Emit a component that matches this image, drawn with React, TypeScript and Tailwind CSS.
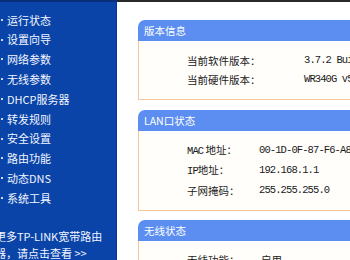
import React from "react";

const cjk = { fontFamily: '"Noto Sans CJK SC", "Noto Sans", sans-serif' };
const mono = { fontFamily: '"Liberation Mono", "Noto Sans CJK SC", monospace' };

const menu = ["运行状态", "设置向导", "网络参数", "无线参数", "DHCP服务器", "转发规则", "安全设置", "路由功能", "动态DNS", "系统工具"];

function Header({ title }: { title: string }) {
  return (
    <div className="h-[21px] bg-[#5b8ef0] rounded-tl-[7px] pl-[6px] text-white text-[10.5px] leading-[21px] whitespace-nowrap" style={cjk}>
      {title}
    </div>
  );
}

function Row({ label, value, lw, h }: { label: React.ReactNode; value: string; lw: number; h: string }) {
  return (
    <div className={`flex items-center ${h} pl-[48px] whitespace-nowrap text-[#1a1a1a]`}>
      <div className="text-[10.5px] shrink-0" style={{ ...cjk, width: lw }}>{label}</div>
      <div className="text-[10.5px] tracking-[-0.9px]" style={mono}>{value}</div>
    </div>
  );
}

export default function App() {
  return (
    <div className="w-[350px] h-[260px] overflow-hidden flex bg-white">
      <div className="w-[117px] shrink-0 h-full bg-[#0a44a8] border-r border-[#07349a] flex flex-col overflow-hidden">
        <div className="h-[2px] bg-[#0a2f7a] shrink-0" />
        <div className="pt-[8px] flex flex-col">
          {menu.map((m) => (
            <div key={m} className="flex items-center h-[19.8px] text-[#f2f6ff] text-[11px] whitespace-nowrap" style={cjk}>
              <span className="w-[2px] h-[2px] bg-[#c9d8f5] ml-[1px] mr-[4px] shrink-0" />
              {m}
            </div>
          ))}
        </div>
        <div className="mt-[20px] ml-[-5px] text-[#f2f6ff] text-[11px] leading-[17px] whitespace-nowrap" style={cjk}>
          <div>更多TP-LINK宽带路由</div>
          <div>器，请点击查看 &gt;&gt;</div>
        </div>
      </div>
      <div className="flex-1 h-full flex flex-col overflow-hidden">
        <div className="h-[2px] bg-[#2a2a2a] shrink-0" />
        <div className="pl-[21px] pt-[18px] flex flex-col w-[300px]">
          <div>
            <Header title="版本信息" />
            <div className="h-[59px] bg-[#fffefb] border-l border-b border-[#f3c99b] pt-[10px]">
              <Row label="当前软件版本：" value="3.7.2 Build 091201 Rel.58730n" lw={117} h="h-[19px]" />
              <Row label="当前硬件版本：" value="WR340G v5 00000000" lw={117} h="h-[19px]" />
            </div>
          </div>
          <div className="mt-[10px]">
            <Header title="LAN口状态" />
            <div className="h-[80px] bg-[#fffefb] border-l border-b border-[#f3c99b] pt-[10px]">
              <Row label={<><span className="tracking-[-0.9px]" style={mono}>MAC</span> 地址：</>} value="00-1D-0F-87-F6-A8" lw={72} h="h-[20px]" />
              <Row label={<><span className="tracking-[-0.9px]" style={mono}>IP</span>地址：</>} value="192.168.1.1" lw={72} h="h-[20px]" />
              <Row label="子网掩码：" value="255.255.255.0" lw={72} h="h-[20px]" />
            </div>
          </div>
          <div className="mt-[9px]">
            <Header title="无线状态" />
            <div className="h-[80px] bg-[#fffefb] border-l border-b border-[#f3c99b] pt-[9px]">
              <div className="flex items-center h-[20px] pl-[48px] whitespace-nowrap text-[#1a1a1a] text-[10.5px]" style={cjk}>
                <div className="w-[74px] shrink-0">无线功能：</div>
                <div>启用</div>
              </div>
            </div>
          </div>
        </div>
      </div>
    </div>
  );
}
